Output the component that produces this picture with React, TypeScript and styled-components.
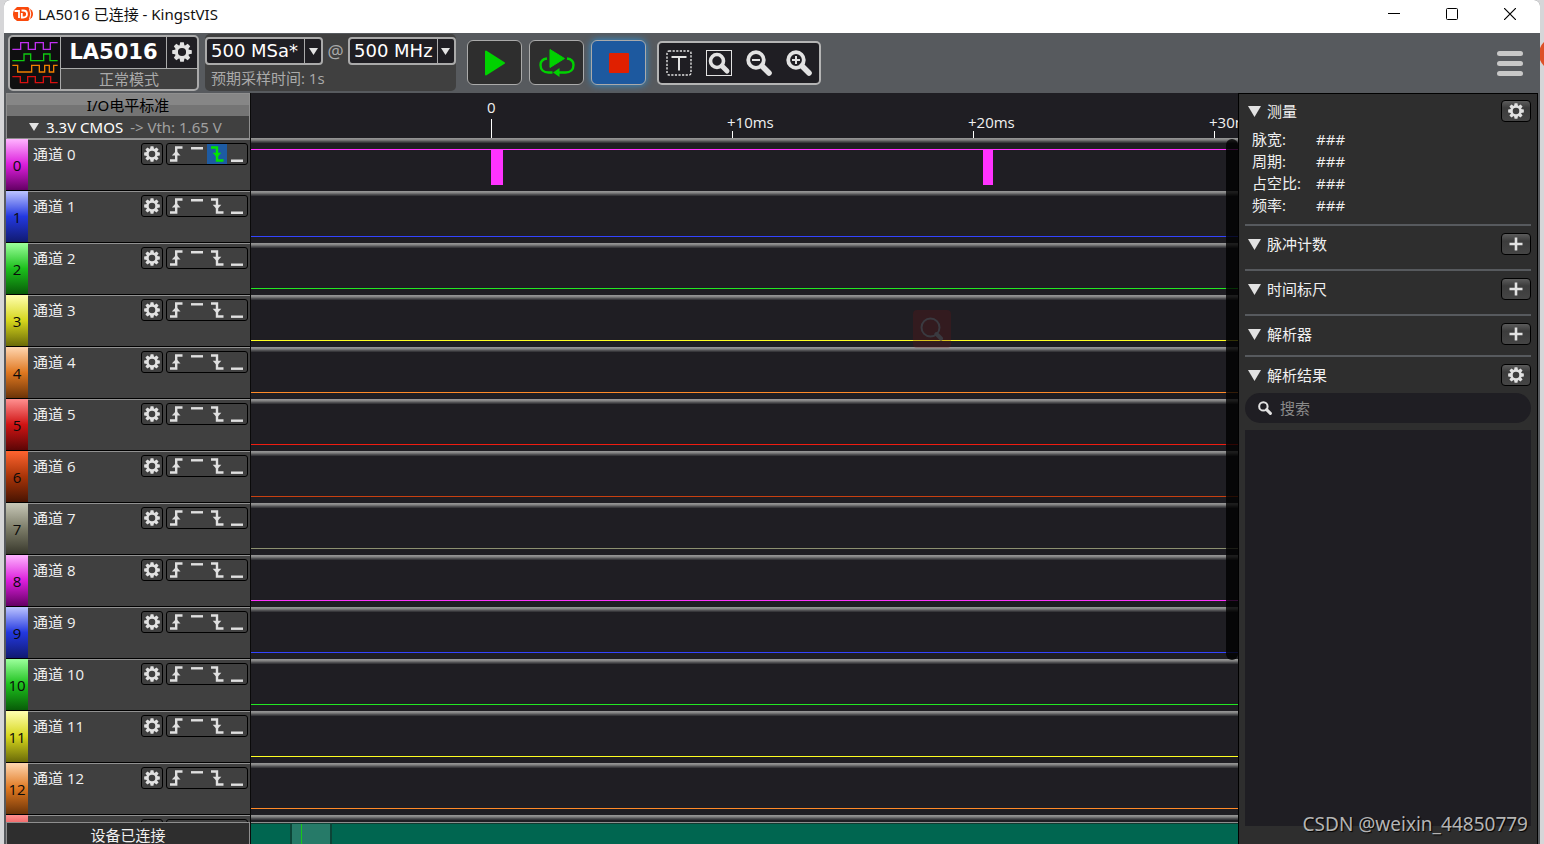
import React from "react";
import styled, { createGlobalStyle, css } from "styled-components";

const UI_FONT = `"Open Sans", "Noto Sans CJK SC", sans-serif`;
const TITLE_FONT = `"Noto Sans", "Noto Sans CJK SC", sans-serif`;
const WIDE_FONT = `"DejaVu Sans", "Noto Sans CJK SC", sans-serif`;

const GlobalStyle = createGlobalStyle`
  *, *::before, *::after { box-sizing: border-box; }
  html, body, #root { height: 100%; margin: 0; }
  body {
    overflow: hidden;
    background: #d6d6d8;
    color: #f0f0f0;
    font: 15px/22px ${UI_FONT};
  }
  button, input, select { font: inherit; color: inherit; margin: 0; padding: 0; border: 0; background: none; }
  h1, h2, p, ul, ol, dl, dd { margin: 0; padding: 0; font-weight: 400; list-style: none; }
  svg { display: block; flex: none; }
`;

/* ---------- frame ---------- */

const Desktop = styled.div`
  position: relative;
  height: 100%;
  padding: 0 4px;
  overflow: hidden;
`;

const Behind = styled.div`
  position: absolute;
  top: 37px;
  right: -29px;
  width: 34px;
  height: 34px;
  border-radius: 50%;
  background: #dd5026;
`;

const Window = styled.div`
  position: relative;
  display: flex;
  flex-direction: column;
  height: 100%;
  overflow: hidden;
  border-radius: 6px 6px 0 0;
  background: #575a5e;
`;

const TitleBar = styled.header`
  display: flex;
  align-items: center;
  flex: none;
  height: 33px;
  padding: 0 1px 5px 9px;
  background: #fff;
  color: #111;
`;

const Title = styled.h1`
  flex: 1;
  padding-left: 5px;
  font: 15px/22px ${TITLE_FONT};
`;

const CaptionButton = styled.button`
  display: grid;
  place-items: center;
  width: 58px;
  height: 28px;
`;

/* ---------- toolbar ---------- */

const Toolbar = styled.div`
  display: flex;
  align-items: center;
  flex: none;
  height: 60px;
  padding: 0 17px 1px 4px;
`;

const Device = styled.section`
  display: grid;
  grid-template-columns: 50px 105px 30px;
  grid-template-rows: 31px 20px;
  gap: 1px;
  border: 2px solid #aaaaaa;
  border-radius: 5px;
  overflow: hidden;
  background: #aaaaaa;
`;

const DeviceLogo = styled.div`
  grid-row: 1 / 3;
  display: grid;
  place-items: center;
  background: #0f0f10;
`;

const DeviceName = styled.strong`
  display: grid;
  place-items: center;
  background: #1f1e23;
  color: #fff;
  font: bold 21px/30px ${WIDE_FONT};
`;

const DeviceSettings = styled.button`
  display: grid;
  place-items: center;
  background: #1f1e23;
`;

const DeviceMode = styled.p`
  grid-column: 2 / 4;
  background: #404040;
  color: #aaaaaa;
  line-height: 20px;
  text-align: center;
`;

const Sampling = styled.section`
  width: 251px;
  height: 57px;
  margin: 0 11px 0 6px;
  padding-top: 3px;
  border-radius: 5px;
  background: #404040;
  color: #aaaaaa;
`;

const SamplingRow = styled.div`
  display: flex;
  align-items: center;
  justify-content: space-between;
`;

const Estimate = styled.p`
  padding: 2px 6px 0;
`;

const SelectBox = styled.label<{ $width: number }>`
  position: relative;
  width: ${(p) => p.$width}px;
  height: 28px;
  border: 2px solid #aaaaaa;
  border-radius: 4px;
  background: #1f1e23;
  color: #fff;

  select {
    width: 100%;
    height: 24px;
    padding: 0 18px 0 4px;
    appearance: none;
    font: 18px/24px ${WIDE_FONT};
  }
`;

const SelectArrow = styled.span`
  position: absolute;
  inset: 0 0 0 auto;
  display: grid;
  place-items: center;
  width: 17px;
  border-left: 1px solid #aaaaaa;
  pointer-events: none;
`;

const At = styled.span`
  font-size: 18px;
`;

const RunButtons = styled.div`
  display: flex;
  gap: 7px;
  margin-right: 11px;
`;

const RunButton = styled.button<{ $active?: boolean }>`
  display: grid;
  place-items: center;
  width: 55px;
  height: 45px;
  border: 1px solid #aaaaaa;
  border-radius: 6px;
  background: #2e2e2e;
  ${(p) =>
    p.$active &&
    css`
      background: #1d599f;
      box-shadow: 0 0 7px #2b8fd6;
    `}
`;

const ViewTools = styled.div`
  display: flex;
  height: 44px;
  border: 2px solid #b4b4b4;
  border-radius: 5px;
  background: #1f1e23;
`;

const ViewButton = styled.button`
  display: grid;
  place-items: center;
  width: 40px;
`;

const MenuButton = styled.button`
  margin-left: auto;
`;

/* ---------- body ---------- */

const Body = styled.main`
  display: grid;
  grid-template-columns: 245px minmax(0, 1fr) 300px;
  grid-template-rows: minmax(0, 1fr);
  flex: 1;
  min-height: 0;
  padding: 0 2px;
`;

const Column = styled.div`
  position: relative;
  display: flex;
  flex-direction: column;
  min-height: 0;
  background: #1f1e23;
`;

const ChannelColumn = styled(Column)`
  border-right: 1px solid #0a0a0a;
`;

const IoHeader = styled.section`
  flex: none;
  height: 46px;
  border: 1px solid #8f8f8f;
  background: #404040;
`;

const IoTitle = styled.h2`
  height: 22px;
  background: linear-gradient(#868686 50%, #747474 50%);
  color: #000;
  font: 15px/22px ${TITLE_FONT};
  text-align: center;
`;

const IoLevel = styled.button`
  display: flex;
  align-items: center;
  gap: 7px;
  width: 100%;
  height: 22px;
  padding-left: 22px;
  color: #a0a0a0;
  font-family: ${TITLE_FONT};
  white-space: nowrap;
`;

const IoName = styled.span`
  color: #fff;
`;

const ClippedList = styled.ul`
  flex: 1;
  min-height: 0;
  overflow: hidden;
`;

const ChannelRow = styled.li`
  display: flex;
  height: 52px;
  border-bottom: 1px solid #000;
  background: #404040;
`;

const ChannelTag = styled.span<{ $tones: string[] }>`
  width: 22px;
  padding-top: 15px;
  background: linear-gradient(${(p) => p.$tones.join(", ")});
  color: #0a0a0a;
  text-align: center;
`;

const ChannelInfo = styled.div`
  display: flex;
  flex: 1;
  align-items: flex-start;
  gap: 3px;
  padding: 3px 2px 0 5px;
  border-top: 1px solid #929292;
`;

const ChannelName = styled.span`
  flex: 1;
`;

const ChannelSettings = styled.button`
  display: grid;
  place-items: center;
  width: 22px;
  height: 22px;
  border: 1px solid #000;
  border-radius: 3px;
`;

const Triggers = styled.div`
  display: flex;
  width: 82px;
  height: 22px;
  border: 1px solid #000;
  border-radius: 3px;
`;

const TriggerButton = styled.button<{ $active: boolean }>`
  width: 20px;
  height: 20px;
  background: ${(p) => (p.$active ? "#1d5ba3" : "transparent")};
  color: ${(p) => (p.$active ? "#00e600" : "#e0e0e0")};
`;

const DeviceStatus = styled.footer`
  flex: none;
  height: 22px;
  border: 1px solid #8f8f8f;
  border-bottom: 0;
  background: #2e2e2e;
  line-height: 24px;
  text-align: center;
`;

/* ---------- waveforms ---------- */

const Ruler = styled.ol`
  display: flex;
  flex: none;
  height: 45px;
  padding-left: 240px;
  overflow: hidden;
`;

const Tick = styled.li<{ $major: boolean }>`
  display: flex;
  flex: none;
  flex-direction: column;
  justify-content: flex-end;
  width: 241px;
  line-height: 16px;

  span {
    margin-left: ${(p) => (p.$major ? -4 : -5)}px;
    padding-bottom: ${(p) => (p.$major ? 4 : 1)}px;
  }

  &::after {
    content: "";
    width: 1px;
    height: ${(p) => (p.$major ? 19 : 7)}px;
    background: #fff;
  }
`;

const Lane = styled.li`
  height: 52px;
  background: linear-gradient(#999, #808080 2px, #5c5c5e 3px, #2c2c30 5px, #1f1e23 5px);

  &:first-child {
    height: 53px;
    padding-top: 1px;
  }
`;

const Overview = styled.div`
  display: flex;
  flex: none;
  height: 22px;
  padding-left: 39px;
  border-top: 1px solid #8f8f8f;
  background: linear-gradient(#10382f 1px, #006650 1px);
`;

const OverviewWindow = styled.div`
  width: 42px;
  padding-left: 9px;
  border: solid #0c4437;
  border-width: 1px 2px 0;
  background: #267a68;
`;

const OverviewCursor = styled.div`
  width: 1px;
  height: 100%;
  background: #18c818;
`;

const ScrollThumb = styled.div`
  position: absolute;
  top: 46px;
  right: 0;
  width: 12px;
  height: 521px;
  border-radius: 6px;
  background: rgba(0, 0, 0, 0.8);
`;

const SearchHint = styled.div`
  position: absolute;
  top: 217px;
  right: 287px;
  display: grid;
  place-items: center;
  width: 38px;
  height: 38px;
  border-radius: 4px;
  background: rgba(110, 20, 20, 0.25);
`;

/* ---------- side panel ---------- */

const Side = styled.aside`
  display: flex;
  flex-direction: column;
  min-height: 0;
  padding: 6px 6px 18px;
  border: 1px solid #000;
  border-bottom: 0;
  background: #2e2e2e;
`;

const Section = styled.section<{ $space: number }>`
  padding-bottom: ${(p) => p.$space}px;
  margin-bottom: 7px;
  border-bottom: 2px solid #575a5e;
`;

const SectionHead = styled.header`
  display: flex;
  align-items: center;
  gap: 6px;
  height: 22px;
  padding-left: 3px;

  h2 {
    flex: 1;
    font-size: 15px;
    line-height: 22px;
  }
`;

const SmallButton = styled.button`
  display: grid;
  place-items: center;
  width: 30px;
  height: 22px;
  border: 1px solid #000;
  border-radius: 4px;
  background: linear-gradient(#5c5c5c, #3c3c3c 35%, #454545);
`;

const Measures = styled.dl`
  display: grid;
  grid-template-columns: 64px 1fr;
  padding: 6px 7px 1px;
`;

const SearchField = styled.label`
  display: flex;
  align-items: center;
  flex: none;
  gap: 8px;
  height: 30px;
  margin: 7px 0;
  padding: 0 13px;
  border-radius: 15px;
  background: #1f1e23;

  input {
    flex: 1;
    min-width: 0;
    outline: 0;
  }
  input::placeholder {
    color: #8a8a8a;
    opacity: 1;
  }
`;

const Results = styled.div`
  flex: 1;
  min-height: 0;
  background: #1f1e23;
`;

const Credit = styled.p`
  position: absolute;
  right: 16px;
  bottom: 8px;
  color: #b4b4b4;
  font: 19px/24px ${TITLE_FONT};
  text-shadow: 1px 1px 1px #000;
`;

/* ---------- icons ---------- */

const Gear = ({ size }: { size: number }) => (
  <svg width={size} height={size} viewBox="-10 -10 20 20" fill="#e2e2e2" aria-hidden>
    {[0, 45, 90, 135, 180, 225, 270, 315].map((a) => (
      <path key={a} d="M-2.5-6 -1.8-9.8H1.8L2.5-6z" transform={`rotate(${a})`} />
    ))}
    <circle r="5.6" fill="none" stroke="#e2e2e2" strokeWidth="3" />
  </svg>
);

const Triangle = ({ w, h }: { w: number; h: number }) => (
  <svg width={w} height={h} viewBox="0 0 12 10" preserveAspectRatio="none" fill="#e2e2e2" aria-hidden>
    <path d="M0 0h12L6 10z" />
  </svg>
);

const Plus = () => (
  <svg width="14" height="14" viewBox="0 0 14 14" stroke="#e2e2e2" strokeWidth="2.6" aria-hidden>
    <path d="M7 .5v13M.5 7h13" />
  </svg>
);

const Magnifier = ({ size, sign }: { size: number; sign?: "-" | "+" }) => (
  <svg width={size} height={size} viewBox="0 0 26 26" fill="none" stroke="#e2e2e2" aria-hidden>
    <circle cx="10" cy="10" r="7.8" strokeWidth="3.8" />
    <path d="M16 16l7 7" strokeWidth="5.6" strokeLinecap="round" />
    {sign && <path d={sign === "+" ? "M6 10h8M10 6v8" : "M6 10h8"} strokeWidth="2" />}
  </svg>
);

const TRIGGERS = [
  { name: "上升沿", line: "M3 16.5h6.200v-13H15.500", head: "M9.200 6.800l4.300 4.700h-8.600z" },
  { name: "高电平", line: "M4 4.300h12" },
  { name: "下降沿", line: "M4 3.500h6v13h6.500", head: "M10 13.500l4.300-4.700H5.700z" },
  { name: "低电平", line: "M4 16.700h12" },
];

/* ---------- data ---------- */

const PALETTE = [
  { line: "#ff33ff", tones: ["#ffb4ff", "#dc1edc 50%", "#640064"] },
  { line: "#3344ff", tones: ["#bcc4ff", "#2338e0 50%", "#101a70"] },
  { line: "#22e822", tones: ["#9cff9c", "#1cc01c 50%", "#085c08"] },
  { line: "#ffff22", tones: ["#ffffb0", "#d6d61c 50%", "#6a6a08"] },
  { line: "#ff8a28", tones: ["#ffd6b0", "#e07820 50%", "#6c3408"] },
  { line: "#f01c10", tones: ["#ff9090", "#d01414 50%", "#5c0606"] },
  { line: "#c84010", tones: ["#ff6430", "#a83408 50%", "#481402"] },
  { line: "#8c9070", tones: ["#c8c8b8", "#7c7c68 50%", "#38382c"] },
];

const CHANNELS = Array.from({ length: 14 }, (_, id) => ({ id, ...PALETTE[id % 8] }));
const TICKS = ["0", "+10ms", "+20ms", "+30ms"];
const MEASURES = ["脉宽", "周期", "占空比", "频率"];
const PULSES = [
  { x: 240, width: 12 },
  { x: 732, width: 10 },
];

const Wave = ({ id, line }: { id: number; line: string }) => (
  <svg width="100%" height="52" fill={line} aria-hidden>
    <rect width="100%" height="1" y={id === 0 ? 10 : 45} />
    {id === 0 && PULSES.map((p) => <rect key={p.x} x={p.x} y="10" width={p.width} height="36" />)}
  </svg>
);

const FoldSection = ({ title, space }: { title: string; space: number }) => (
  <Section $space={space}>
    <SectionHead>
      <Triangle w={13} h={11} />
      <h2>{title}</h2>
      <SmallButton aria-label={`添加${title}`}>
        <Plus />
      </SmallButton>
    </SectionHead>
  </Section>
);

const RateSelect = ({ label, value, width }: { label: string; value: string; width: number }) => (
  <SelectBox $width={width}>
    <select aria-label={label} defaultValue={value}>
      <option>{value}</option>
    </select>
    <SelectArrow>
      <Triangle w={9} h={7} />
    </SelectArrow>
  </SelectBox>
);

export default function App() {
  return (
    <Desktop>
      <GlobalStyle />
      <Behind />
      <Window>
        <TitleBar>
          <svg width="20" height="16" viewBox="0 0 20 16" aria-hidden>
            <path d="M4 1h11l4 3.500Q21 8 19 11.500L15 15H4L1 12.500Q-1 8 1 4z" fill="#fa4a0c" />
            <path d="M1.500 5H6v7" fill="none" stroke="#fff" strokeWidth="1.800" />
            <path d="M8.500 4.500H10q4 0 4 3.500t-4 3.500H8.800V7" fill="none" stroke="#fff" strokeWidth="1.800" />
            <path d="M16.500 2.500q2.500 5.500 0 11" fill="none" stroke="#fff" />
          </svg>
          <Title>LA5016 已连接 - KingstVIS</Title>
          <CaptionButton aria-label="最小化">
            <svg width="12" height="12" viewBox="0 0 12 12" fill="#000"><path d="M0 5h12v1H0z" /></svg>
          </CaptionButton>
          <CaptionButton aria-label="最大化">
            <svg width="12" height="12" viewBox="0 0 12 12" fill="none" stroke="#000"><rect x=".5" y=".5" width="11" height="11" rx="1" /></svg>
          </CaptionButton>
          <CaptionButton aria-label="关闭">
            <svg width="12" height="12" viewBox="0 0 12 12" fill="none" stroke="#000" strokeWidth="1.200"><path d="M0 0l12 12M12 0L0 12" /></svg>
          </CaptionButton>
        </TitleBar>

        <Toolbar>
          <Device>
            <DeviceLogo>
              <svg width="50" height="51" viewBox="30 113 150 153" fill="none" strokeWidth="4" aria-hidden>
                <path stroke="#c030f0" d="M37 150H62V130H85V150H106V130H130V150H151V130H173" />
                <path stroke="#10c810" d="M37 184H72V164H92V184H131V164H150V184H173" />
                <path stroke="#f08000" d="M37 198H53V218H95V198H118V218H134V198H148V218H161V198H173" />
                <path stroke="#d81010" d="M37 232H61V250H83V232H106V250H130V232H152V250H173" />
              </svg>
            </DeviceLogo>
            <DeviceName>LA5016</DeviceName>
            <DeviceSettings aria-label="设备设置"><Gear size={20} /></DeviceSettings>
            <DeviceMode>正常模式</DeviceMode>
          </Device>

          <Sampling>
            <SamplingRow>
              <RateSelect label="采样率" value="500 MSa*" width={118} />
              <At>@</At>
              <RateSelect label="采样频率" value="500 MHz" width={108} />
            </SamplingRow>
            <Estimate>预期采样时间: 1s</Estimate>
          </Sampling>

          <RunButtons>
            <RunButton aria-label="开始">
              <svg width="20" height="26" viewBox="0 0 20 26" fill="#00d200" stroke="#00d200" strokeWidth="2" strokeLinejoin="round"><path d="M1 1.500v23L19 13z" /></svg>
            </RunButton>
            <RunButton aria-label="循环采样">
              <svg width="36" height="30" viewBox="0 0 36 30" fill="#00d200">
                <path d="M11 1.500v18L25.500 10.500z" stroke="#00d200" strokeLinejoin="round" />
                <path d="M8 10.500C4 11 1.500 13.500 1.500 17c0 4.500 3 7.500 8 7.500h4M20 24.500h6.500c5 0 8-3 8-7.500 0-3.500-2.500-6-6.500-6.500" fill="none" stroke="#00d200" strokeWidth="2.400" />
                <path d="M20.500 20v9L14 24.500z" />
              </svg>
            </RunButton>
            <RunButton aria-label="停止" $active>
              <svg width="20" height="20" viewBox="0 0 20 20" fill="#e02000"><rect width="20" height="20" rx="1" /></svg>
            </RunButton>
          </RunButtons>

          <ViewTools>
            <ViewButton aria-label="文字标注">
              <svg width="26" height="26" viewBox="0 0 26 26" fill="none" stroke="#e2e2e2">
                <rect x="1" y="1" width="24" height="24" rx="2" strokeWidth="1.400" strokeDasharray="2.200 1.400" />
                <path d="M5.500 7h15M13 7v13.500" strokeWidth="2" />
              </svg>
            </ViewButton>
            <ViewButton aria-label="适合窗口">
              <svg width="26" height="26" viewBox="0 0 26 26" fill="none" stroke="#e2e2e2">
                <rect x=".5" y=".5" width="25" height="25" />
                <circle cx="11" cy="11" r="6.500" strokeWidth="3.600" />
                <path d="M16 16l5 5" strokeWidth="5" strokeLinecap="round" />
              </svg>
            </ViewButton>
            <ViewButton aria-label="缩小"><Magnifier size={26} sign="-" /></ViewButton>
            <ViewButton aria-label="放大"><Magnifier size={26} sign="+" /></ViewButton>
          </ViewTools>

          <MenuButton aria-label="菜单">
            <svg width="26" height="26" viewBox="0 0 26 26" fill="#c8c8c8">
              <rect width="26" height="5" y="1" rx="2.500" />
              <rect width="26" height="5" y="11" rx="2.500" />
              <rect width="26" height="5" y="21" rx="2.500" />
            </svg>
          </MenuButton>
        </Toolbar>

        <Body>
          <ChannelColumn>
            <IoHeader>
              <IoTitle>I/O电平标准</IoTitle>
              <IoLevel>
                <Triangle w={10} h={8} />
                <IoName>3.3V CMOS</IoName>
                <span>-&gt; Vth: 1.65 V</span>
              </IoLevel>
            </IoHeader>
            <ClippedList>
              {CHANNELS.map(({ id, tones }) => (
                <ChannelRow key={id}>
                  <ChannelTag $tones={tones}>{id}</ChannelTag>
                  <ChannelInfo>
                    <ChannelName>通道 {id}</ChannelName>
                    <ChannelSettings aria-label={`通道 ${id} 设置`}><Gear size={16} /></ChannelSettings>
                    <Triggers>
                      {TRIGGERS.map((t, i) => {
                        const active = id === 0 && i === 2;
                        return (
                          <TriggerButton key={t.name} $active={active} aria-label={t.name} aria-pressed={active}>
                            <svg width="20" height="20" viewBox="0 0 20 20" fill="none">
                              <path d={t.line} stroke="currentColor" strokeWidth="2.400" />
                              {t.head && <path d={t.head} fill="currentColor" />}
                            </svg>
                          </TriggerButton>
                        );
                      })}
                    </Triggers>
                  </ChannelInfo>
                </ChannelRow>
              ))}
            </ClippedList>
            <DeviceStatus>设备已连接</DeviceStatus>
          </ChannelColumn>

          <Column>
            <Ruler>
              {TICKS.map((t, i) => (
                <Tick key={t} $major={i === 0}><span>{t}</span></Tick>
              ))}
            </Ruler>
            <ClippedList>
              {CHANNELS.map(({ id, line }) => (
                <Lane key={id}><Wave id={id} line={line} /></Lane>
              ))}
            </ClippedList>
            <Overview>
              <OverviewWindow><OverviewCursor /></OverviewWindow>
            </Overview>
            <ScrollThumb />
            <SearchHint>
              <svg width="24" height="24" viewBox="0 0 24 24" fill="none" stroke="#3a3a40" strokeWidth="2">
                <circle cx="10.500" cy="10.500" r="9" />
                <path d="M16.500 17l4.500 4.500" strokeWidth="4" strokeLinecap="round" />
              </svg>
            </SearchHint>
          </Column>

          <Side>
            <Section $space={7}>
              <SectionHead>
                <Triangle w={13} h={11} />
                <h2>测量</h2>
                <SmallButton aria-label="测量设置"><Gear size={16} /></SmallButton>
              </SectionHead>
              <Measures>
                {MEASURES.map((m) => (
                  <React.Fragment key={m}>
                    <dt>{m}:</dt>
                    <dd>###</dd>
                  </React.Fragment>
                ))}
              </Measures>
            </Section>
            <FoldSection title="脉冲计数" space={14} />
            <FoldSection title="时间标尺" space={14} />
            <FoldSection title="解析器" space={10} />
            <SectionHead>
              <Triangle w={13} h={11} />
              <h2>解析结果</h2>
              <SmallButton aria-label="解析结果设置"><Gear size={16} /></SmallButton>
            </SectionHead>
            <SearchField>
              <Magnifier size={14} />
              <input type="search" placeholder="搜索" aria-label="搜索" />
            </SearchField>
            <Results />
          </Side>
        </Body>
      </Window>
      <Credit>CSDN @weixin_44850779</Credit>
    </Desktop>
  );
}
